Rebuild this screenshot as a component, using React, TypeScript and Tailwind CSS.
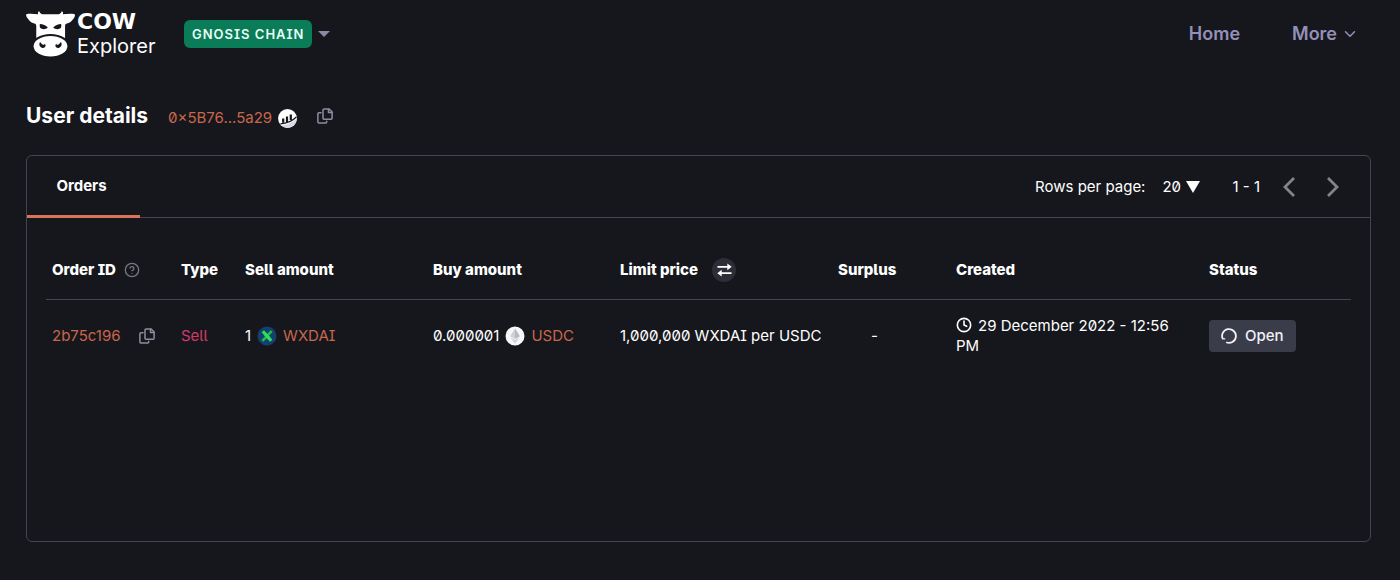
import type { ReactNode } from "react";
import { ChevronDown, CircleHelp, Clock } from "lucide-react";

function CowMark() {
  return (
    <svg width="49" height="46" viewBox="0 0 148 138" fill="#fff" aria-hidden>
      <path d="M1 9c12-2 24 0 36 0-2-4-1-8 3-9 2 5 5 9 10 9h48c5 0 8-4 10-9 4 1 5 5 3 9 12 0 24-2 36 0 3 5-2 12-7 18-5 7-11 9-16 10-4 1-6 3-6 7v51H31V44c0-4-2-6-6-7-5-1-11-3-16-10C4 21-2 14 1 9Z" />
      <ellipse cx="74" cy="106" rx="58" ry="37" fill="#16171d" />
      <ellipse cx="74" cy="106" rx="51" ry="31" />
      <g fill="#16171d">
        <path d="M42 39c9 0 18 4 24 11-6 5-17 6-23 1-2-3-2-8-1-12Z" />
        <path d="M106 39c-9 0-18 4-24 11 6 5 17 6 23 1 2-3 2-8 1-12Z" />
        <path d="M42 94c4 0 4 5 8 7 4 2 7 0 6-3 7 7 1 15-7 13-7-2-11-10-7-17Z" />
        <path d="M106 94c-4 0-4 5-8 7-4 2-7 0-6-3-7 7-1 15 7 13 7-2 11-10 7-17Z" />
      </g>
    </svg>
  );
}

function CopyButton({ label }: { label: string }) {
  return (
    <button type="button" aria-label={label} className="self-center text-[#8d8d9f]">
      <svg
        width="16"
        height="16"
        viewBox="0 0 16 16"
        fill="none"
        stroke="currentColor"
        strokeWidth="1.5"
        strokeLinejoin="round"
        strokeLinecap="round"
      >
        <path d="M7 .9h5.2L15.1 4v6.2a1 1 0 0 1-1 1H7a1 1 0 0 1-1-1V1.900a1 1 0 0 1 1-1Z" />
        <path d="M11.500 1.200v3.200H15M4 4.800H1.900a1 1 0 0 0-1 1v8.300a1 1 0 0 0 1 1h6.800a1 1 0 0 0 1-1v-.8" />
      </svg>
    </button>
  );
}

function ScanIcon() {
  return (
    <svg width="19" height="19" viewBox="0 0 19 19" aria-hidden>
      <circle cx="9.500" cy="9.500" r="9.400" fill="#fff" />
      <path
        d="M5.200 13.800V9.500M9 13V7.500M12.800 11V5.500"
        stroke="#16171d"
        strokeWidth="2.200"
      />
      <path
        d="M2.400 14.800C8 14.500 14 12.500 18.300 8"
        stroke="#16171d"
        strokeWidth="1.200"
        fill="none"
      />
      <path d="M3.200 16.500C9 16 15 13.500 18.800 9.600A9.400 9.400 0 0 1 3.200 16.500Z" fill="#d6d9e2" />
    </svg>
  );
}

function WxdaiIcon() {
  return (
    <svg width="20" height="20" viewBox="0 0 20 20" className="shrink-0" aria-hidden>
      <circle cx="10" cy="10" r="9.500" fill="#153f6d" />
      <path d="M5.800 5.200 14.200 14.800" stroke="#2be05a" strokeWidth="3.200" />
      <path d="M14.600 5.200 5.400 14.800" stroke="#19c24b" strokeWidth="2.600" />
      <path d="M7.800 7.500 12.200 12.500" stroke="#2be05a" strokeWidth="3.200" />
    </svg>
  );
}

function EtherIcon() {
  return (
    <svg width="20" height="20" viewBox="0 0 20 20" className="shrink-0" aria-hidden>
      <circle cx="10" cy="10" r="9.500" fill="#f7f7fa" />
      <path d="M10 2.500 14.800 10.300 10 13.100 5.200 10.300Z" fill="#cfd0d5" />
      <path d="M10 2.500 14.800 10.300 10 13.100Z" fill="#b9bac1" />
      <path d="M5.200 11.300 10 14.100 14.800 11.300 10 17.500Z" fill="#cfd0d5" />
    </svg>
  );
}

function SwapIcon() {
  return (
    <svg width="15" height="14" viewBox="0 0 15 14" aria-hidden>
      <path d="M.5 3.800H11M14.500 10.200H4" stroke="#fff" strokeWidth="1.800" />
      <path d="M10.300.4 14.700 3.800 10.300 7.200ZM4.700 6.800.3 10.200 4.700 13.600Z" fill="#fff" />
    </svg>
  );
}

function PageArrow({ label, d }: { label: string; d: string }) {
  return (
    <button type="button" aria-label={label} className="text-[#838389]">
      <svg width="14" height="22" viewBox="0 0 14 22" fill="none" stroke="currentColor" strokeWidth="2.800">
        <path d={d} />
      </svg>
    </button>
  );
}

function Th({ className, children }: { className: string; children: ReactNode }) {
  return (
    <th scope="col" className={`${className} h-[59px] px-1.5 pt-0.5 text-left font-extrabold`}>
      {children}
    </th>
  );
}

export default function App() {
  return (
    <div className="min-h-screen bg-[#16171d] pr-[29px] pl-[26px] pb-9 font-['Inter',sans-serif] text-[15px] leading-5 text-white [font-feature-settings:'ss02','zero']">
      <header className="flex h-[67px] items-center">
        <a href="#home" aria-label="CoW Explorer" className="flex items-center gap-0.5">
          <CowMark />
          <span className="flex w-[89px] flex-col [font-feature-settings:normal]">
            <span className="font-['DejaVu_Sans',sans-serif] text-[22px] leading-6 font-bold">COW</span>
            <span className="text-[20px] leading-6">Explorer</span>
          </span>
        </a>
        <button type="button" className="ml-[18px] flex items-center gap-1.5">
          <span className="rounded-md bg-[#0a7c58] px-2 py-1 text-[13px] font-semibold tracking-[1px] text-[#e9fff6]">
            GNOSIS CHAIN
          </span>
          <svg width="12" height="6" viewBox="0 0 12 6" fill="#8a88a5" aria-hidden>
            <path d="M0 0h12L6 6Z" />
          </svg>
        </button>
        <nav className="ml-auto flex items-center gap-[52px] pr-3 text-lg font-semibold text-[#9590b8]">
          <a href="#home">Home</a>
          <button type="button" className="flex items-center gap-1">
            More
            <ChevronDown size={18} strokeWidth={2} />
          </button>
        </nav>
      </header>

      <main>
        <div className="mt-[35px] flex h-7 items-baseline">
          <h1 className="text-[21px] leading-7 font-bold [font-feature-settings:normal]">User details</h1>
          <a href="#address" className="mr-5 ml-5 flex items-center gap-1.5 text-[#c9664b]">
            0×5B76...5a29
            <ScanIcon />
          </a>
          <CopyButton label="Copy address" />
        </div>

        <section className="mt-[25px] min-h-[387px] rounded-md border border-[#45464d]">
          <div className="flex h-[62px] items-stretch justify-between border-b border-[#45464d]">
            <button
              type="button"
              className="-mb-px w-[113px] border-b-[3px] border-[#d9735a] pr-1 font-bold"
            >
              Orders
            </button>
            <div className="flex items-center pr-[30px]">
              <label htmlFor="rows">Rows per page:</label>
              <div className="relative ml-[17px] flex items-center">
                <select id="rows" defaultValue="20" className="w-[38px] appearance-none bg-transparent">
                  <option>20</option>
                  <option>50</option>
                </select>
                <svg
                  width="14"
                  height="12"
                  viewBox="0 0 14 12"
                  fill="#fff"
                  className="pointer-events-none absolute right-0"
                  aria-hidden
                >
                  <path d="M0 0h14L7 12Z" />
                </svg>
              </div>
              <span className="mr-[22px] ml-8">1 - 1</span>
              <div className="flex gap-[30px]">
                <PageArrow label="Previous page" d="M12 2 3 11l9 9" />
                <PageArrow label="Next page" d="m2 2 9 9-9 9" />
              </div>
            </div>
          </div>

          <div className="px-[19px] pt-[22px]">
            <table className="w-full table-fixed">
              <thead className="border-b border-[#45464d]">
                <tr>
                  <Th className="w-[129px]">
                    <span className="flex items-center gap-2">
                      Order ID
                      <CircleHelp size={16} strokeWidth={2} className="text-[#77777f]" />
                    </span>
                  </Th>
                  <Th className="w-16">Type</Th>
                  <Th className="w-[188px]">Sell amount</Th>
                  <Th className="w-[187px]">Buy amount</Th>
                  <Th className="w-[218px]">
                    <span className="flex items-center gap-3.5">
                      Limit price
                      <button
                        type="button"
                        aria-label="Invert price"
                        className="flex size-6 items-center justify-center rounded-full bg-[#2c2d36]"
                      >
                        <SwapIcon />
                      </button>
                    </span>
                  </Th>
                  <Th className="w-[118px]">Surplus</Th>
                  <Th className="w-[253px]">Created</Th>
                  <Th className="w-[148px]">Status</Th>
                </tr>
              </thead>
              <tbody>
                <tr className="h-[74px]">
                  <td className="px-1.5">
                    <span className="flex items-center gap-[18px]">
                      <a href="#order" className="text-[#c9664b]">2b75c196</a>
                      <CopyButton label="Copy order ID" />
                    </span>
                  </td>
                  <td className="px-1.5 text-[#d13c66]">Sell</td>
                  <td className="px-1.5">
                    <span className="flex items-center gap-1.5">
                      1
                      <WxdaiIcon />
                      <a href="#wxdai" className="text-[#c9664b]">WXDAI</a>
                    </span>
                  </td>
                  <td className="px-1.5">
                    <span className="flex items-center gap-1.5">
                      0.000001
                      <EtherIcon />
                      <a href="#usdc" className="text-[#c9664b]">USDC</a>
                    </span>
                  </td>
                  <td className="px-1.5 whitespace-nowrap">1,000,000 WXDAI per USDC</td>
                  <td className="pl-[39px]">-</td>
                  <td className="pr-8 pl-1.5">
                    <Clock size={16} strokeWidth={2.4} className="mr-1.5 inline align-[-2px]" />
                    29 December 2022 - 12:56 PM
                  </td>
                  <td className="px-1.5">
                    <span className="inline-flex h-8 items-center gap-2 rounded bg-[#3b3c4a] px-3 font-medium text-[#f1f1f8]">
                      <svg width="16" height="16" viewBox="0 0 16 16" fill="none" stroke="currentColor" strokeWidth="1.800" aria-hidden>
                        <path d="M1.900 11.200A6.900 6.900 0 1 1 5.200 14.300" />
                        <path d="M1.200 10.600 4.200 10.900" strokeWidth="1.200" />
                      </svg>
                      Open
                    </span>
                  </td>
                </tr>
              </tbody>
            </table>
          </div>
        </section>
      </main>
    </div>
  );
}
